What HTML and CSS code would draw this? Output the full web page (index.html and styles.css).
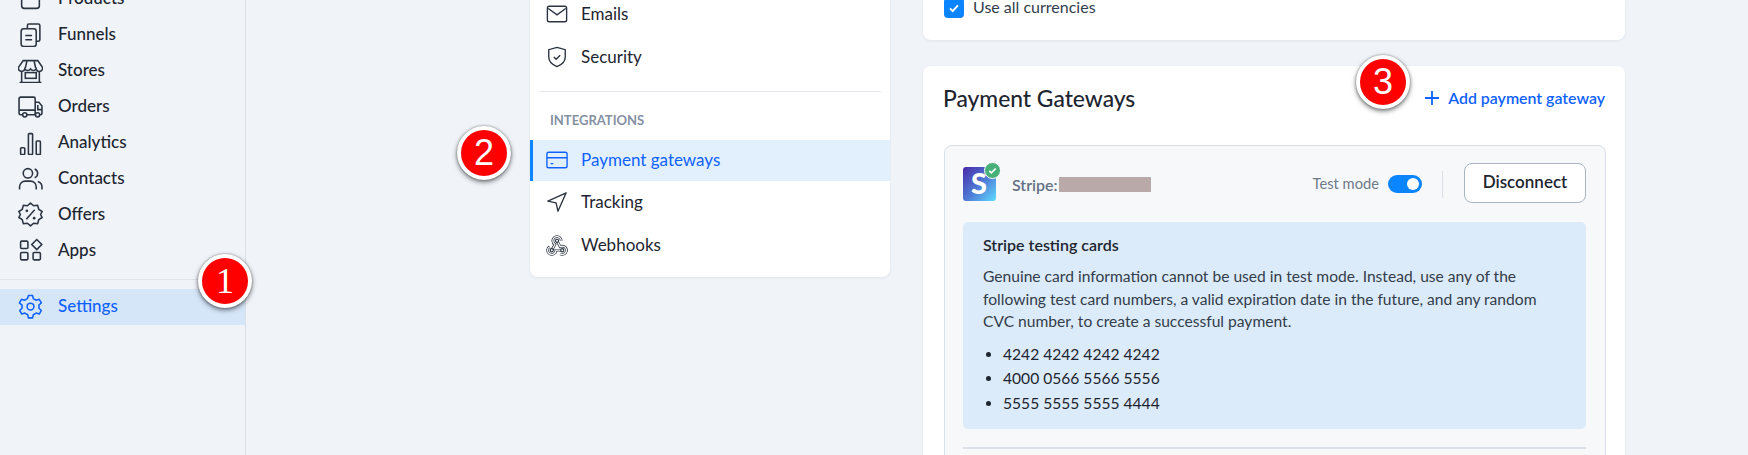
FILE: index.html
```html
<!DOCTYPE html>
<html lang="en">
<head>
<meta charset="utf-8">
<title>Settings - Payment gateways</title>
<link rel="stylesheet" href="styles.css">
</head>
<body>
<div class="page">
  <aside class="sidebar">
    <nav class="side-list">
      <a class="side-item"><svg class="ic" viewBox="0 0 24 24"><rect x="3.500" y="3" width="17" height="18.500" rx="2.500"/><path d="M9 3v5a3 3 0 0 0 6 0V3"/></svg><span>Products</span></a>
      <a class="side-item"><svg class="ic" viewBox="0 0 24 24"><path d="M9 6V3.500A1.500 1.500 0 0 1 10.500 2h9A1.500 1.500 0 0 1 21 3.500V17a1.500 1.500 0 0 1-1.500 1.500H17.500"/><rect x="3" y="6.500" width="14.500" height="17" rx="2.500"/><path d="M7 13h6.500M7 17h6.500"/></svg><span>Funnels</span></a>
      <a class="side-item"><svg class="ic" viewBox="0 0 24 24"><path d="M5 2.500h14L23.500 9a3 3 0 0 1-6 1.500A3.200 3.200 0 0 1 12 10.500a3.200 3.200 0 0 1-5.500 0A3 3 0 0 1 .500 9z"/><path d="M8.500 3 7 10M15.500 3 17 10M3.500 12.500v10.500M20.500 12.500v10.500M1.500 23.500h21"/><rect x="7" y="14" width="10.500" height="5.500"/></svg><span>Stores</span></a>
      <a class="side-item"><svg class="ic" viewBox="0 0 24 24"><path d="M4.500 20H2.500A1.500 1.500 0 0 1 1 18.500V4.500A1.500 1.500 0 0 1 2.500 3H15a1.500 1.500 0 0 1 1.500 1.500V20H8.500"/><path d="M16.500 8h3.500l3 3.500V18.500A1.500 1.500 0 0 1 21.500 20h-1M16.500 20h0.500M19 10.500v4.500h4M1 15.500h15.500"/><circle cx="6.500" cy="20" r="2"/><circle cx="18.800" cy="20" r="2"/></svg><span>Orders</span></a>
      <a class="side-item"><svg class="ic" viewBox="0 0 24 24"><rect x="2.500" y="17" width="4" height="6.500" rx=".8"/><rect x="10" y="3.500" width="4" height="20" rx=".8"/><rect x="17.500" y="10.500" width="4" height="13" rx=".8"/></svg><span>Analytics</span></a>
      <a class="side-item"><svg class="ic" viewBox="0 0 24 24"><circle cx="9.500" cy="7" r="4.500"/><path d="M1.500 22.500V20A5.500 5.500 0 0 1 7 14.500h5A5.500 5.500 0 0 1 17.500 20v2.500M16 2.800a4.500 4.500 0 0 1 0 8.400M19 14.800a5.500 5.500 0 0 1 4 5.200v2.500"/></svg><span>Contacts</span></a>
      <a class="side-item"><svg class="ic" viewBox="0 0 24 24"><path d="M12 1l3 2.600 3.900-.4 1 3.800 3.300 2.100-1.500 2.900 1.500 2.900-3.300 2.100-1 3.800-3.900-.4-3 2.600-3-2.600-3.900.4-1-3.800L.800 14.900 2.300 12 .800 9.100 4.100 7l1-3.800 3.900.4z" stroke-linejoin="round"/><path d="M8 16.500 16 7.500"/><circle cx="8.500" cy="8.500" r="1.300" class="dot"/><circle cx="15.500" cy="15.500" r="1.300" class="dot"/></svg><span>Offers</span></a>
      <a class="side-item"><svg class="ic" viewBox="0 0 24 24"><rect x="2.500" y="3" width="7" height="7" rx="1"/><path d="M18 1.500l4.800 4.800-4.800 4.800-4.800-4.800z"/><rect x="2.500" y="14" width="7" height="7" rx="1"/><rect x="14.500" y="14" width="7" height="7" rx="1"/></svg><span>Apps</span></a>
    </nav>
    <div class="side-sep"></div>
    <a class="side-item side-active"><svg class="ic" viewBox="0 0 24 24"><path d="M10 1.500h4l.7 3 2.700 1.500 3-.9 2 3.400-2.300 2.100v3.100l2.300 2.100-2 3.400-3-.9-2.700 1.600-.7 3h-4l-.7-3-2.700-1.600-3 .9-2-3.400 2.300-2.100v-3.100L1.300 8.500l2-3.400 3 .9L9 4.500z" stroke-linejoin="round"/><circle cx="12" cy="12.100" r="3.300"/></svg><span>Settings</span></a>
  </aside>

  <section class="menu-col">
    <div class="menu-card">
      <a class="menu-item"><svg class="ic-sm" viewBox="0 0 24 24"><rect x="1.500" y="3.500" width="21" height="17" rx="2"/><path d="M2.500 6l9.500 7 9.500-7"/></svg><span>Emails</span></a>
      <a class="menu-item"><svg class="ic-sm" viewBox="0 0 24 24"><path d="M12 1.500l9 2.500v8c0 5-4 8.500-9 10.500-5-2-9-5.500-9-10.500V4z"/><path d="M8.500 12l2.500 2.500 4.500-4.500"/></svg><span>Security</span></a>
      <div class="menu-sep"></div>
      <div class="menu-head">INTEGRATIONS</div>
      <a class="menu-item menu-active"><svg class="ic-sm" viewBox="0 0 24 24"><rect x="1" y="3.500" width="22" height="17" rx="2"/><path d="M1 9.500h22M5 16h3"/></svg><span>Payment gateways</span></a>
      <a class="menu-item"><svg class="ic-sm" viewBox="0 0 24 24"><path d="M22 2 2 11l9 2 2 9z" stroke-linejoin="round"/></svg><span>Tracking</span></a>
      <a class="menu-item"><svg class="ic-sm hook" viewBox="1.500 1.500 21 21"><path class="hook-out" d="M4.900 13.600a4 4 0 1 0 6.100 3.400h6M15.100 20.500a4 4 0 1 0 1.900-7.500c-.7 0-1.400.2-2 .5l-3-5.500M16 8a4 4 0 1 0-8 0c0 1.500.8 2.800 2 3.500l-3 5.500"/><path class="hook-in" d="M4.900 13.600a4 4 0 1 0 6.100 3.400h6M15.100 20.500a4 4 0 1 0 1.900-7.500c-.7 0-1.400.2-2 .5l-3-5.500M16 8a4 4 0 1 0-8 0c0 1.500.8 2.800 2 3.500l-3 5.500"/><circle cx="12" cy="8" r="1.500"/><circle cx="7" cy="17" r="1.500"/><circle cx="17" cy="17" r="1.500"/></svg><span>Webhooks</span></a>
    </div>
  </section>

  <section class="content-col">
    <div class="card card-top">
      <label class="check-row"><span class="checkbox"><svg viewBox="0 0 16 16"><path d="M3.500 8.500l3 3 6-6.500"/></svg></span><span class="check-text">Use all currencies</span></label>
    </div>
    <div class="card card-gateways">
      <div class="gw-head">
        <h2>Payment Gateways</h2>
        <a class="add-link"><svg viewBox="0 0 16 16"><path d="M8 1v14M1 8h14"/></svg><span>Add payment gateway</span></a>
      </div>
      <div class="panel">
        <div class="panel-row">
          <div class="logo">
            <svg class="logo-s" viewBox="0 0 33 34"><defs><linearGradient id="lg" x1="0" y1="0" x2="1" y2="1"><stop offset="0" stop-color="#4a2aa8"/><stop offset=".55" stop-color="#4f7fd8"/><stop offset="1" stop-color="#5fdcff"/></linearGradient></defs><rect width="33" height="34" rx="3" fill="url(#lg)"/><text x="16" y="27" class="logo-letter">S</text></svg>
            <span class="logo-ok"><svg viewBox="0 0 16 16"><path d="M4 8.500l2.500 2.500L12 5.500"/></svg></span>
          </div>
          <div class="acct"><span>Stripe:</span><span class="redact"></span></div>
          <span class="test-label">Test mode</span>
          <span class="toggle"><i></i></span>
          <span class="vsep"></span>
          <button class="btn">Disconnect</button>
        </div>
        <div class="notice">
          <h3>Stripe testing cards</h3>
          <p>Genuine card information cannot be used in test mode. Instead, use any of the following test card numbers, a valid expiration date in the future, and any random CVC number, to create a successful payment.</p>
          <ul>
            <li>4242 4242 4242 4242</li>
            <li>4000 0566 5566 5556</li>
            <li>5555 5555 5555 4444</li>
          </ul>
        </div>
        <div class="panel-sep"></div>
      </div>
    </div>
  </section>
</div>
<div class="badge badge-1 serif">1</div>
<div class="badge badge-2">2</div>
<div class="badge badge-3">3</div>
</body>
</html>
```

FILE: styles.css
```css
* { box-sizing: border-box; }
html, body { margin: 0; height: 100%; overflow: hidden; }
body { background: #f0f4f9; font-family: "Lato", "Noto Sans", sans-serif; font-size: 16px; color: #1d2530; position: relative; }
a { color: inherit; text-decoration: none; }
.page { display: flex; height: 455px; align-items: flex-start; }

.sidebar { width: 246px; height: 455px; border-right: 1px solid #d9e0e8; flex: none; }
.side-list { margin-top: -20px; }
.side-item { display: flex; align-items: center; height: 36px; padding-left: 18px; gap: 15px; font-size: 17px; font-weight: 500; color: #1d2530; }
.side-item span { margin-top: -1px; }
.ic { width: 25px; height: 25px; flex: none; fill: none; stroke: #2b3440; stroke-width: 1.5; }
.ic .dot { fill: #2b3440; stroke: none; }
.side-sep { height: 1px; background: #e0e5ea; margin-top: 11px; }
.side-active { margin-top: 9px; background: #d6e6f9; color: #0f62fe; padding-bottom: 2px; }
.side-active .ic { stroke: #0f62fe; }

.menu-col { width: 360px; margin-left: 284px; flex: none; }
.menu-card { background: #fff; border-radius: 0 0 8px 8px; box-shadow: 0 1px 3px rgba(30,50,80,.08); height: 283px; margin-top: -6px; }
.menu-item { display: flex; align-items: center; height: 41px; margin-bottom: 2px; padding-left: 16px; gap: 13px; font-size: 17px; color: #1d2530; }
.menu-item span { margin-top: -3px; }
.ic-sm { width: 22px; height: 22px; flex: none; fill: none; stroke: #2b3440; stroke-width: 1.5; margin-top: -1px; }
.hook .hook-out { stroke-width: 2.600; }
.hook .hook-in { stroke: #fff; stroke-width: 1.200; }
.hook circle { fill: #fff; stroke-width: 1.100; }
.menu-sep { height: 1px; background: #e4e8ec; margin: 13px 9px 0; }
.menu-head { font-size: 13px; font-weight: 700; color: #8591a3; padding-left: 20px; margin-top: 20px; height: 28px; line-height: 16px; }
.menu-active { background: #e2f0fd; color: #0f62fe; border-left: 3px solid #0a84ff; padding-left: 13px; margin-bottom: 1px; }
.menu-active .ic-sm { stroke: #0f62fe; }

.content-col { width: 702px; margin-left: 33px; flex: none; }
.card { background: #fff; border-radius: 8px; box-shadow: 0 1px 3px rgba(30,50,80,.08); }
.card-top { height: 40px; border-radius: 0 0 8px 8px; padding: 0 20px 0 21px; }
.check-row { display: flex; align-items: center; gap: 9px; height: 18px; font-size: 16px; color: #333d4b; }
.check-text { margin-top: -6px; }
.checkbox { width: 20px; height: 20px; border-radius: 4px; background: #0a84ff; flex: none; display: flex; align-items: center; justify-content: center; margin-top: -2px; }
.checkbox svg { width: 14px; height: 14px; fill: none; stroke: #fff; stroke-width: 2.200; }
.card-gateways { margin-top: 26px; height: 400px; border-radius: 8px; padding: 0 19px 0 21px; }
.gw-head { display: flex; align-items: center; justify-content: space-between; height: 79px; padding-bottom: 16px; }
.gw-head h2 { margin: 0 0 0 -1px; font-size: 22.800px; font-weight: 500; color: #1d2530; }
.add-link { display: flex; align-items: center; gap: 8px; color: #0f62fe; font-size: 15.900px; font-weight: 600; margin-right: 1px; }
.add-link svg { width: 16px; height: 16px; fill: none; stroke: #0f62fe; stroke-width: 1.800; }
.panel { background: #f6f8fa; border: 1px solid #d8dfe8; border-radius: 8px; padding: 0 19px 0 18px; height: 320px; }
.panel-row { display: flex; align-items: center; height: 76px; }
.logo { position: relative; width: 33px; height: 34px; flex: none; }
.logo-s { display: block; width: 33px; height: 34px; }
.logo-letter { font-family: "Lato", sans-serif; font-weight: 900; font-size: 29px; fill: #fff; text-anchor: middle; }
.logo-ok { position: absolute; right: -5px; top: -5px; width: 17px; height: 17px; border-radius: 50%; background: #46b078; border: 1px solid #fff; display: flex; align-items: center; justify-content: center; }
.logo-ok svg { width: 13px; height: 13px; fill: none; stroke: #fff; stroke-width: 2; }
.acct { display: flex; align-items: center; margin-left: 16px; font-size: 16px; font-weight: 600; color: #647083; flex: 1; }
.redact { width: 92px; height: 15px; background: #b9a9a8; margin-left: 1px; }
.test-label { font-size: 14.700px; color: #6e7a88; margin-top: -2px; }
.toggle { width: 34px; height: 18px; background: #0a84ff; border-radius: 9px; margin-left: 9px; display: flex; align-items: center; justify-content: flex-end; padding-right: 3px; }
.toggle i { width: 12px; height: 12px; border-radius: 50%; background: #fff; display: block; }
.vsep { width: 1px; height: 27px; background: #d8dfe8; margin: 0 21px 0 20px; }
.btn { width: 122px; height: 40px; background: #fff; border: 1px solid #a9b5c4; border-radius: 8px; font: 600 17px/34px "Lato", sans-serif; color: #1d2530; padding: 0 0 2px; margin-top: -2px; }
.notice { background: #dcebf9; border-radius: 5px; height: 207px; padding: 13px 24px 15px 20px; color: #333d4b; font-size: 15.600px; }
.notice h3 { margin: 0 0 10px; font-size: 16px; font-weight: 600; line-height: 20px; color: #1d2530; }
.notice p { margin: 0 0 9px; line-height: 22.500px; }
.notice ul { margin: 0; padding-left: 20px; color: #1d2530; }
.notice li { line-height: 24.700px; }
.panel-sep { height: 2px; background: #dbe1e8; margin-top: 18px; }

.badge { position: absolute; width: 54px; height: 54px; border-radius: 50%; background: #f00; border: 4px solid #fff; box-shadow: 0 2px 5px rgba(0,0,0,.55), 0 0 2px rgba(0,0,0,.4); color: #fff; font: 36px/46px "Liberation Sans", sans-serif; text-align: center; }
.serif { font: 36px/46px "Liberation Serif", serif; }
.badge-1 { left: 198px; top: 254px; }
.badge-2 { left: 457px; top: 126px; }
.badge-3 { left: 1356px; top: 55px; }
```
